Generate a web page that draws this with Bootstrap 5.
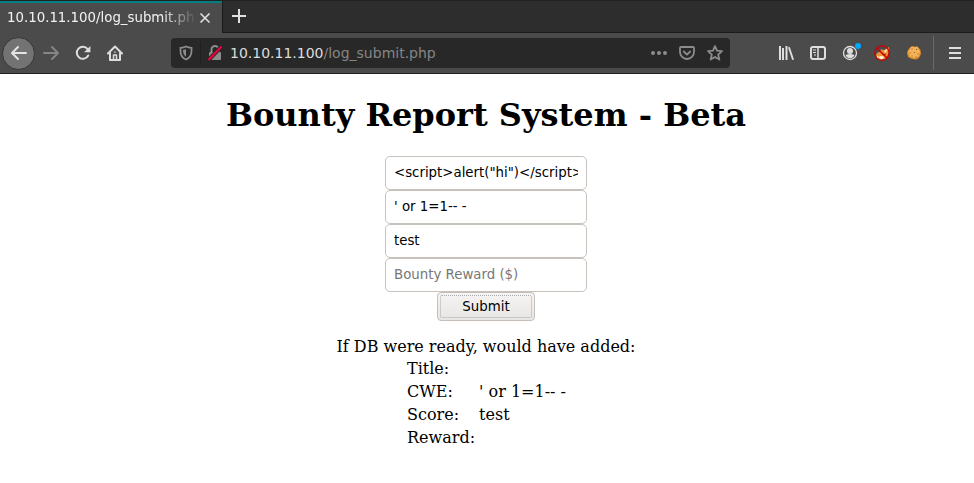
<!DOCTYPE html>
<html lang="en">
<head>
<meta charset="utf-8">
<title>log_submit.php</title>
<link href="https://cdn.jsdelivr.net/npm/bootstrap@5.3.0/dist/css/bootstrap.min.css" rel="stylesheet">
<style>
body{font-family:"DejaVu Serif",serif;color:#000;background:#fff;overflow:hidden}
.chrome{font-family:"DejaVu Sans",sans-serif}
.tabstrip{height:33px;background:#2d2d2d;border-top:1px solid #222}
.page-tab{width:222px;height:32px;background:#4b4b4b;border-top:2px solid #008080;padding-left:7px}
.tab-label{width:188px;font-size:13.33px;line-height:28px;padding-bottom:1px;color:#f2f2f2;-webkit-mask-image:linear-gradient(90deg,#000 155px,transparent 190px);mask-image:linear-gradient(90deg,#000 155px,transparent 190px)}
.tab-rest{border-left:1px solid #1b1b1b;border-bottom:1px solid #1b1b1b;padding-bottom:2px}
.toolbar{height:41px;background:#4b4b4b;border-bottom:1px solid #222;padding-left:2px;padding-right:3px}
.tool{width:32px;height:32px;flex:none;display:flex;align-items:center;justify-content:center}
.back-btn{width:33px;height:33px;background:#737373;border:1px solid #353535;border-radius:50%}
.address{width:559px;height:30px;background:#282828;border-radius:4px;margin-left:40px;padding:0 1px;font-size:14px;color:#ddd}
.address .tool{width:28px;height:28px}
.url-text{padding-left:1px}
.vline{width:1px;background:#202020;height:22px}
.tool-sep{width:1px;height:34px;background:#6a6a6a;margin:0 5px 0 3px}
.path-text{color:#858585}
.content{padding-right:2px}
h1.heading{font-size:32px;font-weight:700;line-height:38px;margin:22px 0 22px;color:#000}
.field{width:202px;height:34px;border:1px solid #c8c2bd;border-radius:5px;padding:0 8px 2px;font:13.33px "DejaVu Sans",sans-serif;color:#000;box-shadow:none}
.field::placeholder{color:#777;opacity:1}
.submit-btn{width:98px;height:29px;padding:2px;border:1px solid #c6bfb9;border-radius:4px;background:linear-gradient(#f5f4f3,#e8e6e4);font:13.33px "DejaVu Sans",sans-serif;color:#000}
.submit-btn span{display:block;height:23px;line-height:21px;border:1px dotted #a8a8a8;border-radius:2px}
.result{font-size:16px;line-height:19px;margin-top:16px}
.result table{margin:1px 0 0 1px}
.result td{padding:2px 1px;height:23px}
.result td+td{padding-left:3px}
</style>
<script src="https://cdn.jsdelivr.net/npm/bootstrap@5.3.0/dist/js/bootstrap.bundle.min.js"></script>
</head>
<body>
<header class="chrome">
<div class="tabstrip d-flex">
<div class="page-tab d-flex align-items-center flex-shrink-0">
<div class="tab-label text-nowrap overflow-hidden flex-shrink-0">10.10.11.100/log_submit.ph</div>
<svg width="20" height="20" viewBox="0 0 20 20" stroke="#e0e0e0" stroke-width="1.6" fill="none"><path d="M5.500 5.500l9 9m0-9l-9 9"/></svg>
</div>
<div class="tab-rest flex-grow-1 d-flex align-items-center">
<svg width="32" height="30" viewBox="0 0 32 30" stroke="#e0e0e0" stroke-width="2"><path d="M9 15h14M16 8v14"/></svg>
</div>
</div>
<nav class="toolbar d-flex align-items-center">
<div class="tool back-btn"><svg width="18" height="18" viewBox="0 0 18 18" fill="none" stroke="#e4e4e4" stroke-width="2" stroke-linecap="round" stroke-linejoin="round"><path d="M16 9H2.500M8 3L2 9l6 6"/></svg></div>
<div class="tool"><svg width="18" height="18" viewBox="0 0 18 18" fill="none" stroke="#858585" stroke-width="2" stroke-linecap="round" stroke-linejoin="round"><path d="M2 9h13.500M10 3l6 6-6 6"/></svg></div>
<div class="tool"><svg width="16" height="16" viewBox="0 0 16 16"><path d="M13.200 10.500A6 6 0 1 1 12.600 4.200" fill="none" stroke="#dedede" stroke-width="2" stroke-linecap="round"/><path d="M15.400 1v6.300H9.100z" fill="#dedede"/></svg></div>
<div class="tool"><svg width="16" height="16" viewBox="0 0 16 16" fill="none" stroke="#dedede" stroke-width="2" stroke-linejoin="round" stroke-linecap="round"><path d="M1 8.500L8 1.500l7 7M3 8v7h10V8"/><path d="M6.500 14v-4h3v4M8 7v.2" stroke-width="1.500"/></svg></div>
<div class="address d-flex align-items-center">
<div class="tool"><svg width="14" height="16" viewBox="0 0 14 16"><path d="M7 1.500C5 2.500 3 2.700 1.500 2.800V6c0 4 2 7 5.500 8.500 3.500-1.500 5.500-4.500 5.500-8.500V2.800C11 2.700 9 2.500 7 1.500z" fill="none" stroke="#8c8c8c" stroke-width="1.800"/><path d="M7 4.300v7.500C5 10.300 4 8.500 4 5z" fill="#8c8c8c"/></svg></div>
<div class="vline"></div>
<div class="tool"><svg width="16" height="16" viewBox="0 0 16 16"><path d="M4.500 7V4.500a3.500 3.500 0 0 1 7 0V7" fill="none" stroke="#8c8c8c" stroke-width="2"/><rect x="2" y="7" width="12" height="8" rx="1" fill="#8c8c8c"/><path d="M1.500 15L14.500 1.500" stroke="#282828" stroke-width="4"/><path d="M1.500 15L14.500 1.500" stroke="#f5003d" stroke-width="2"/></svg></div>
<div class="url-text flex-grow-1 text-nowrap">10.10.11.100<span class="path-text">/log_submit.php</span></div>
<div class="tool"><svg width="16" height="16" viewBox="0 0 16 16" fill="#8c8c8c"><circle cx="2" cy="8" r="2"/><circle cx="8" cy="8" r="2"/><circle cx="14" cy="8" r="2"/></svg></div>
<div class="tool"><svg width="16" height="16" viewBox="0 0 16 16" fill="none" stroke="#8c8c8c" stroke-width="1.800" stroke-linejoin="round" stroke-linecap="round"><path d="M2 2h12q1 0 1 1v4a7 7 0 0 1-14 0V3q0-1 1-1z"/><path d="M4.800 6.500L8 9.600l3.200-3.100"/></svg></div>
<div class="tool"><svg width="16" height="16" viewBox="0 0 16 16" fill="none" stroke="#8c8c8c" stroke-width="1.800" stroke-linejoin="round"><path d="M8 1l2 4.700 5 .5-3.800 3.400 1.200 5L8 12l-4.400 2.600 1.200-5L1 6.200l5-.5z"/></svg></div>
</div>
<div class="d-flex align-items-center ms-auto">
<div class="tool"><svg width="16" height="16" viewBox="0 0 16 16"><path d="M1 1h2v14H1zM4 3h2v12H4zM7.500 1h2v14h-2zM10 2.500l1.800-.5L16 14.500l-1.800.5z" fill="#dedede"/></svg></div>
<div class="tool"><svg width="16" height="16" viewBox="0 0 16 16" fill="none" stroke="#dedede"><rect x="1" y="2" width="14" height="12" rx="2" stroke-width="2"/><path d="M8 2v12" stroke-width="1.500"/><path d="M3 5h3M3 7.500h3M4 10h2" stroke-width="1.200"/></svg></div>
<div class="tool"><svg width="22" height="22" viewBox="0 0 22 22"><circle cx="11" cy="11" r="6.500" fill="none" stroke="#dedede" stroke-width="1.300"/><circle cx="11" cy="9" r="3" fill="#dedede"/><path d="M6.500 13q4.500-2 9 0-1.500 3.300-4.500 3.300T6.500 13z" fill="#dedede"/><circle cx="19" cy="4" r="3" fill="#00a9ff"/></svg></div>
<div class="tool"><svg width="16" height="16" viewBox="0 0 16 16"><path d="M2 10q1-3 4-3l1-3q2 2 5 0l3-2q1 4-1 7-1 5-6 6Q3 15 2 10z" fill="#ef9134"/><path d="M5 12q3-2 5 0-1 3-4 2zM10 6l3-2-1 4zM3 11l3 1-3 1z" fill="#fff3df"/><path d="M8 8l1 2 3-1" stroke="#6b3014" fill="none"/><circle cx="8" cy="8" r="7.200" fill="none" stroke="#d00000" stroke-width="1.300"/><path d="M3 3l10 10" stroke="#d00000" stroke-width="1.500"/></svg></div>
<div class="tool"><svg width="16" height="16" viewBox="0 0 16 16"><path d="M5 1.500l2-.5 2 1 2-1 2 2 1.500 2 .5 4-2 4-3 1.500-4-.5L2 12 1 8l1-3z" fill="#d98c28"/><path d="M5 2h6l3 4-1 5-4 2-5-1-2-5z" fill="#f3b35a"/><path d="M6 4h.1M10.500 4.500h.1M4 8h.1M8.500 7.500h.1M12 9h.1M6 11h.1M10 12h.1" stroke="#96560f" stroke-width="1.200" stroke-linecap="round"/></svg></div>
<div class="tool-sep"></div>
<div class="tool"><svg width="12" height="12" viewBox="0 0 12 12" stroke="#dedede" stroke-width="2"><path d="M0 1h12M0 6h12M0 11h12"/></svg></div>
</div>
</nav>
</header>
<main class="content d-flex flex-column align-items-center">
<h1 class="heading">Bounty Report System - Beta</h1>
<form class="d-flex flex-column align-items-center" onsubmit="return false">
<input class="field form-control" value="&lt;script&gt;alert(&quot;hi&quot;)&lt;/script&gt;" aria-label="Title">
<input class="field form-control" value="' or 1=1-- -" aria-label="CWE">
<input class="field form-control" value="test" aria-label="Score">
<input class="field form-control" placeholder="Bounty Reward ($)" aria-label="Reward">
<button class="submit-btn" type="submit"><span>Submit</span></button>
</form>
<section class="result d-flex flex-column align-items-center">
<div>If DB were ready, would have added:</div>
<table>
<tr><td>Title:</td><td></td></tr>
<tr><td>CWE:</td><td>' or 1=1-- -</td></tr>
<tr><td>Score:</td><td>test</td></tr>
<tr><td>Reward:</td><td></td></tr>
</table>
</section>
</main>
</body>
</html>
